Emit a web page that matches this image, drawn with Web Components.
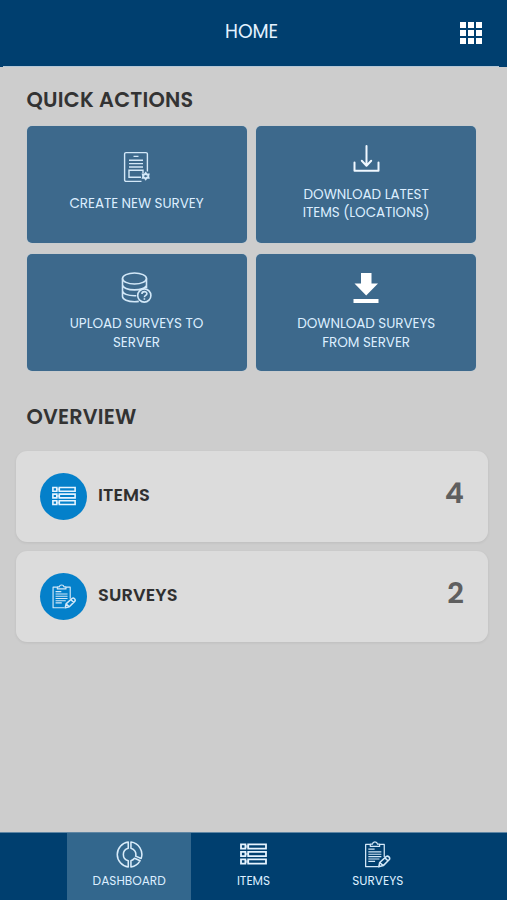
<!DOCTYPE html>
<html lang="en">
<head>
<meta charset="utf-8">
<meta name="viewport" content="width=device-width, initial-scale=1">
<title>Home</title>
<style>
  body {
    margin: 0;
    background: #cdcdcd;
    font-family: Poppins, Lato, "Liberation Sans", sans-serif;
  }
</style>
</head>
<body>
<survey-app></survey-app>

<script>
const ICONS = {
  grid: `<svg viewBox="0 0 22 22" fill="#fff"><path d="M0 0h6v6H0zM8 0h6v6H8zM16 0h6v6h-6zM0 8h6v6H0zM8 8h6v6H8zM16 8h6v6h-6zM0 16h6v6H0zM8 16h6v6H8zM16 16h6v6h-6z"/></svg>`,

  create: `<svg viewBox="0 0 27 32" fill="none" stroke="#d3e8f8" stroke-width="1.4">
    <path d="M18.500 30.400H3a1.400 1.400 0 0 1-1.400-1.400V3A1.400 1.400 0 0 1 3 1.600h20A1.400 1.400 0 0 1 24.400 3v17.500M10.500 5.400h5M6 9.200h14M6 12.600h14M6 16h14M18 26.200H6v-7h14v3"/>
    <path d="M22.700 22l1.100 1.500 1.800-.1-.4 1.700.4 1.700-1.800-.1-1.100 1.500-1.100-1.500-1.800.1.400-1.700-.4-1.700 1.800.1z" stroke-width="1.900"/></svg>`,

  tray: `<svg viewBox="0 0 27 27" fill="none" stroke="#f0f8ff" stroke-width="2" stroke-linecap="round" stroke-linejoin="round">
    <path d="M13.500 1v19.500M8.800 15.800l4.700 5 4.700-5M1.500 17.500v8.300h24v-8.300"/></svg>`,

  database: `<svg viewBox="0 0 31 31" fill="none" stroke="#d3e8f8" stroke-width="1.600">
    <ellipse cx="13.500" cy="6.500" rx="12" ry="5.500"/>
    <path d="M1.500 6.500v18c0 3 5.400 5.300 12 5.300 1.600 0 3-.1 4.300-.4M25.500 6.500v9.500M1.500 12.700c0 3 5.400 5.200 12 5.200 5.600 0 10.400-1.600 11.700-3.900M1.500 18.700c0 3 5.400 5.100 12 5.100h1.800"/>
    <circle cx="23.300" cy="23.500" r="6.600"/>
    <path d="M20.900 22c0-3.200 5-3 5-.3 0 1.800-2.500 1.700-2.500 3.500M23.400 26.300v1.500" stroke-width="1.600"/></svg>`,

  download: `<svg viewBox="0 0 26 30" fill="#fff"><path d="M8 0h10.500v10.500H25L13.200 22.500 1.500 10.500H8zM.5 26H25.500v4H.5z"/></svg>`,

  dashboard: `<svg viewBox="0 0 28 28" fill="none" stroke="#d9ecfa" stroke-width="1.600" stroke-linejoin="round">
    <path d="M12.700 1.100a13 13 0 0 0 0 25.800v-6.400a6.700 6.700 0 0 1 0-13zM15.500 1.100v6.400a6.700 6.700 0 0 1 4.900 8.200l5.700 2.500A13 13 0 0 0 15.500 1.100zM15.500 20.400a6.700 6.700 0 0 0 3.700-2.500l5.800 2.500a13 13 0 0 1-9.500 6.500z"/></svg>`,

  items: `<svg viewBox="0 0 27 22" fill="none" stroke="#e6f4ff" stroke-width="1.800">
    <path d="M1 1.400h4.400v4.200H1zM8.200 1.400H26v4.200H8.200zM1 8.900h4.400v4.200H1zM8.200 8.900H26v4.200H8.200zM1 16.400h4.400v4.200H1zM8.200 16.400H26v4.200H8.200z"/>
    <path d="M5.400 3.500h2.800M5.400 11h2.800M5.400 18.500h2.800" stroke-width="2.600" opacity=".6"/></svg>`,

  surveys: `<svg viewBox="0 0 27 28" fill="none" stroke="#d3e8f8" stroke-width="1.300" stroke-linejoin="round">
    <path d="M14 26.700H1.200V3.500h5M15.500 3.500h5v13M6 5.500V3.200h2.200a2.700 2.700 0 0 1 5.300 0h2.200v2.300z"/>
    <path d="M4 8.500h6.500M4 11.200h13.500M4 13.700h13.500M4 16.200h13.500M4 18.700h11.500M4 21.200h7" stroke-width="1.200"/>
    <path d="M14.800 26.800l1-4.500 7-6.300c1.600-1 4.200 1.300 3 3.200l-6.300 6.300zM15.800 22.300l3.700 3.200M21.200 17.500l3.400 3.200" stroke-width="1.600"/></svg>`
};

class AppIcon extends HTMLElement {
  constructor() {
    super();
    this.attachShadow({ mode: 'open' });
  }

  connectedCallback() {
    this.shadowRoot.innerHTML = `
      <style>
        :host { display: block; flex: none; }
        svg { display: block; width: 100%; height: 100%; }
      </style>
      ${ICONS[this.getAttribute('name')] || ''}
    `;
  }
}

class AppHeader extends HTMLElement {
  constructor() {
    super();
    this.attachShadow({ mode: 'open' });
  }

  connectedCallback() {
    this.shadowRoot.innerHTML = `
      <style>
        :host {
          display: grid;
          grid-template-columns: 1fr auto 1fr;
          box-sizing: border-box;
          height: 67px;
          padding: 0 25px 1px 21px;
          background: linear-gradient(#b4c7d6, #b4c7d6) 3px 66px / 496px 1px no-repeat, #003f6f;
        }
        h1 {
          grid-column: 2;
          margin: 20px 0 0;
          font-size: 18.7px;
          line-height: 24px;
          font-weight: 400;
          letter-spacing: -0.1px;
          color: #e3f2ff;
        }
        app-icon {
          width: 22px;
          height: 22px;
          margin-top: 22px;
          justify-self: end;
        }
      </style>
      <h1><slot></slot></h1>
      <app-icon name="grid"></app-icon>
    `;
  }
}

class ActionCard extends HTMLElement {
  constructor() {
    super();
    this.attachShadow({ mode: 'open' });
  }

  connectedCallback() {
    this.shadowRoot.innerHTML = `
      <style>
        :host {
          display: flex;
          flex-direction: column;
          align-items: center;
          justify-content: center;
          box-sizing: border-box;
          height: 117px;
          padding-bottom: var(--lift, 0);
          border-radius: 5px;
          background: #3d698c;
          color: #dceeff;
          box-shadow: 0 0 1px #a9c9df;
        }
        app-icon {
          width: var(--icon-w, 27px);
          height: var(--icon-h, 32px);
        }
        .label {
          margin-top: var(--gap, 11px);
          font-size: 13.5px;
          line-height: 18.5px;
          letter-spacing: -0.05px;
          text-align: center;
        }
      </style>
      <app-icon name="${this.getAttribute('icon')}"></app-icon>
      <div class="label"><slot></slot></div>
    `;
  }
}

class OverviewRow extends HTMLElement {
  constructor() {
    super();
    this.attachShadow({ mode: 'open' });
  }

  connectedCallback() {
    this.shadowRoot.innerHTML = `
      <style>
        :host {
          display: flex;
          align-items: center;
          box-sizing: border-box;
          height: 91px;
          padding: 0 24px;
          border-radius: 11px;
          background: #dcdcdc;
          box-shadow: 0 1px 3px rgba(0, 0, 0, 0.08);
        }
        .badge {
          display: grid;
          place-items: center;
          width: 47px;
          height: 47px;
          border-radius: 50%;
          background: #0480ca;
        }
        app-icon {
          width: 24px;
          height: var(--icon-h, 20px);
        }
        .name {
          flex: 1;
          margin: 0 0 3px 11px;
          font-size: 17.8px;
          font-weight: 600;
          letter-spacing: 0.1px;
          color: #303030;
        }
        .count {
          margin-bottom: 6px;
          font-size: 29px;
          font-weight: 600;
          color: #5f5f5f;
        }
      </style>
      <div class="badge"><app-icon name="${this.getAttribute('icon')}"></app-icon></div>
      <div class="name"><slot></slot></div>
      <div class="count">${this.getAttribute('count')}</div>
    `;
  }
}

class NavTab extends HTMLElement {
  constructor() {
    super();
    this.attachShadow({ mode: 'open' });
  }

  connectedCallback() {
    this.shadowRoot.innerHTML = `
      <style>
        :host {
          display: flex;
          flex-direction: column;
          align-items: center;
          box-sizing: border-box;
          width: 124.3px;
          padding-top: 7px;
          color: #dceeff;
        }
        :host([active]) { background: #33678d; }
        .icon {
          display: grid;
          place-items: center;
          height: 28px;
        }
        app-icon { width: 27px; height: var(--icon-h, 27px); }
        .label {
          margin-top: 4px;
          font-size: 12.1px;
          line-height: 18px;
        }
      </style>
      <div class="icon"><app-icon name="${this.getAttribute('icon')}"></app-icon></div>
      <div class="label"><slot></slot></div>
    `;
  }
}

class SurveyApp extends HTMLElement {
  constructor() {
    super();
    this.attachShadow({ mode: 'open' });
  }

  connectedCallback() {
    this.shadowRoot.innerHTML = `
      <style>
        :host {
          display: flex;
          flex-direction: column;
          height: 900px;
          overflow: hidden;
          background: #cdcdcd;
        }
        main { flex: 1; }
        h2 {
          margin: 0 0 0 26.5px;
          font-size: 20.8px;
          line-height: 26px;
          font-weight: 600;
          letter-spacing: 0.2px;
          color: #333;
        }
        .quick { padding-top: 20px; }
        .overview { padding-top: 33px; }
        .actions {
          display: grid;
          grid-template-columns: 220px 220px;
          gap: 11.5px 9.7px;
          margin: 12.5px 0 0 26.5px;
        }
        .rows {
          display: grid;
          gap: 9px;
          margin: 20.5px 19px 0 16px;
        }
        nav {
          display: flex;
          justify-content: center;
          box-sizing: border-box;
          height: 68px;
          border-top: 1px solid #5f86a4;
          background: #003f6f;
        }
      </style>
      <app-header>HOME</app-header>
      <main>
        <h2 class="quick">QUICK ACTIONS</h2>
        <div class="actions">
          <action-card icon="create" style="--gap: 12px; --lift: 3px">CREATE NEW SURVEY</action-card>
          <action-card icon="tray" style="--icon-h: 27px; --gap: 14px; --lift: 1px">DOWNLOAD LATEST<br>ITEMS (LOCATIONS)</action-card>
          <action-card icon="database" style="--icon-w: 31px; --icon-h: 31px; --gap: 12px; --lift: 1px">UPLOAD SURVEYS TO<br>SERVER</action-card>
          <action-card icon="download" style="--icon-w: 26px; --icon-h: 30px; --gap: 12.5px">DOWNLOAD SURVEYS<br>FROM SERVER</action-card>
        </div>
        <h2 class="overview">OVERVIEW</h2>
        <div class="rows">
          <overview-row icon="items" count="4">ITEMS</overview-row>
          <overview-row icon="surveys" count="2" style="--icon-h: 25px">SURVEYS</overview-row>
        </div>
      </main>
      <nav>
        <nav-tab icon="dashboard" active>DASHBOARD</nav-tab>
        <nav-tab icon="items" style="--icon-h: 22px">ITEMS</nav-tab>
        <nav-tab icon="surveys">SURVEYS</nav-tab>
      </nav>
    `;
  }
}

customElements.define('app-icon', AppIcon);
customElements.define('app-header', AppHeader);
customElements.define('action-card', ActionCard);
customElements.define('overview-row', OverviewRow);
customElements.define('nav-tab', NavTab);
customElements.define('survey-app', SurveyApp);
</script>
</body>
</html>
